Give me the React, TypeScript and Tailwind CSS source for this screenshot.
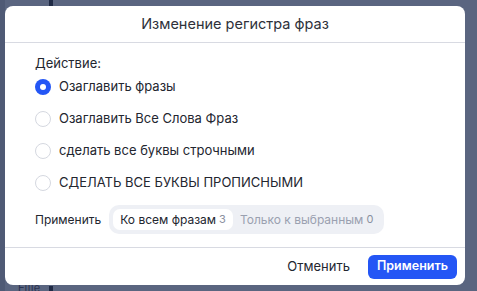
import React, { useState } from 'react';

const options = [
  'Озаглавить фразы',
  'Озаглавить Все Слова Фраз',
  'сделать все буквы строчными',
  'СДЕЛАТЬ ВСЕ БУКВЫ ПРОПИСНЫМИ',
];

const App = () => {
  const [action, setAction] = useState(0);
  const [scope, setScope] = useState<'all' | 'selected'>('all');

  return (
    <div
      className="relative w-[477px] h-[291px] overflow-hidden bg-[#5a6580] pl-[5px] pt-[6px]"
      style={{ fontFamily: 'Inter, "Noto Sans", sans-serif' }}
    >
      {/* background app bits peeking out */}
      <div className="absolute left-0 top-0 w-[5px] h-full bg-[#4f5a75]" />
      <div className="absolute left-[49px] top-0 w-[4px] h-[6px] bg-[#1f2a45]" />
      <div className="absolute left-[18px] top-[283px] text-[11px] leading-none text-[#2a3350]">Ещё</div>
      <div className="absolute left-[49px] top-[286px] w-[4px] h-[5px] bg-[#1f2a45]" />

      <div className="relative w-[460px] h-[279px] bg-white rounded-[8px] flex flex-col text-[#23262f]">
        {/* header */}
        <div className="h-[37px] flex items-center justify-center border-b border-[#d8dae2] text-[14.5px] text-[#2e313a]">
          Изменение регистра фраз
        </div>

        {/* body */}
        <div className="flex-1 px-[30px] pt-[12px]">
          <div className="text-[13px] leading-[16px]">Действие:</div>
          <div className="flex flex-col">
            {options.map((label, i) => (
              <button
                key={label}
                onClick={() => setAction(i)}
                className="h-[32px] flex items-center gap-[8px] text-left text-[13px]"
              >
                {action === i ? (
                  <span className="w-[16px] h-[16px] rounded-full bg-[#2456f5] flex items-center justify-center">
                    <span className="w-[6px] h-[6px] rounded-full bg-white" />
                  </span>
                ) : (
                  <span className="w-[16px] h-[16px] rounded-full border border-[#d5d8e0] bg-white" />
                )}
                <span>{label}</span>
              </button>
            ))}
          </div>

          <div className="flex items-center gap-[8px] mt-[6px]">
            <span className="text-[12px]">Применить</span>
            <div className="h-[29px] flex items-center rounded-[10px] bg-[#eef0f5] p-[4px] text-[12px]">
              <button
                onClick={() => setScope('all')}
                className={`h-[21px] px-[7px] rounded-[7px] flex items-center gap-[3px] ${
                  scope === 'all' ? 'bg-white text-[#23262f]' : 'text-[#9aa0b0]'
                }`}
              >
                Ко всем фразам <span className="text-[11px] text-[#8a90a0]">3</span>
              </button>
              <button
                onClick={() => setScope('selected')}
                className={`h-[21px] px-[7px] rounded-[7px] flex items-center gap-[3px] ${
                  scope === 'selected' ? 'bg-white text-[#23262f]' : 'text-[#9aa0b0]'
                }`}
              >
                Только к выбранным <span className="text-[11px] text-[#8a90a0]">0</span>
              </button>
            </div>
          </div>
        </div>

        {/* footer */}
        <div className="h-[38px] border-t border-[#d8dae2] flex items-center justify-end gap-[18px] pr-[8px]">
          <button className="text-[13px] text-[#23262f]">Отменить</button>
          <button className="h-[24px] px-[9px] rounded-[6px] bg-[#2456f5] text-white text-[12.5px] font-semibold">
            Применить
          </button>
        </div>
      </div>
    </div>
  );
};

export default App;
